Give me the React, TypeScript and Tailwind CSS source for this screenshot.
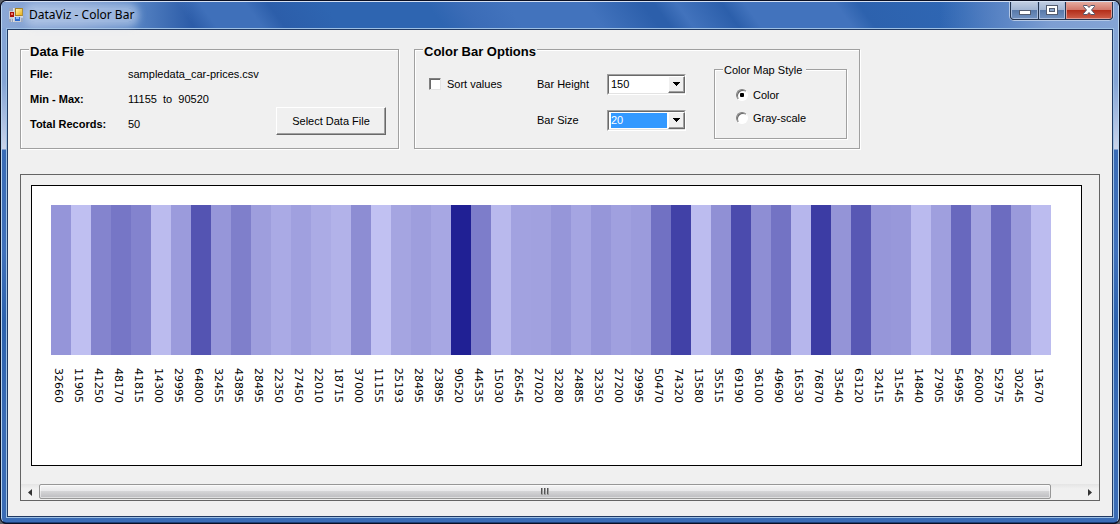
import { useState } from "react";
import type { ReactNode } from "react";

const PRICES = [
  32660, 11905, 41250, 48170, 41815, 14300, 29995, 64800, 32455, 43895,
  28495, 22350, 27450, 22010, 18715, 37000, 11155, 25193, 28495, 23895,
  90520, 44535, 15030, 26545, 27020, 32280, 24885, 32350, 27200, 29995,
  50470, 74320, 13580, 35515, 69190, 36100, 49690, 16530, 76870, 33540,
  63120, 32415, 31545, 14840, 27905, 54995, 26000, 52975, 30245, 13670,
];

const MIN = Math.min(...PRICES);
const MAX = Math.max(...PRICES);

function shade(value: number, gray: boolean) {
  const t = (value - MIN) / (MAX - MIN);
  const level = Math.round(193 - 161 * t);
  const blue = gray ? level : Math.round(242 - 94 * t);
  return `rgb(${level}, ${level}, ${blue})`;
}

function Group({ title, small, className, children }: {
  title: string;
  small?: boolean;
  className: string;
  children: ReactNode;
}) {
  return (
    <fieldset
      className={`min-w-0 border border-[#a0a0a0] shadow-[inset_1px_1px_0_#fff,1px_1px_0_#fff] ${className}`}
    >
      <legend
        className={`ml-2 bg-[#f0f0f0] leading-4 ${small ? "pt-[2px] pr-1 pl-px text-[11px]" : "px-px pt-[5px] text-[13px] font-bold"}`}
      >
        {title}
      </legend>
      {children}
    </fieldset>
  );
}

function Row({ label, value }: { label: string; value: string }) {
  return (
    <div className="flex h-[25px] items-center">
      <dt className="w-[98px] font-bold">{label}</dt>
      <dd className="whitespace-pre">{value}</dd>
    </div>
  );
}

function Combo({ id, label, value, options, selected, onChange }: {
  id: string;
  label: string;
  value: number;
  options: number[];
  selected?: boolean;
  onChange: (v: number) => void;
}) {
  return (
    <div className="flex h-9 items-center">
      <label htmlFor={id} className="w-[70px]">{label}</label>
      <div className="relative h-[21px] w-[79px] border border-t-[#a0a0a0] border-r-white border-b-white border-l-[#a0a0a0]">
        <div className="h-full border border-t-[#696969] border-r-[#e3e3e3] border-b-[#e3e3e3] border-l-[#696969] bg-white">
          <select
            id={id}
            value={value}
            onChange={(e) => onChange(Number(e.target.value))}
            className={`block h-full w-full appearance-none rounded-none border border-white bg-clip-content py-0 pr-4 pl-px text-[11px] leading-[15px] outline-none ${selected ? "bg-[#3399ff] text-white" : "bg-white text-black"}`}
          >
            {options.map((o) => (
              <option key={o} value={o}>{o}</option>
            ))}
          </select>
        </div>
        <span className="pointer-events-none absolute inset-y-px right-0 flex w-[17px] items-center justify-center border border-t-white border-r-[#696969] border-b-[#696969] border-l-white bg-[#f0f0f0] shadow-[inset_-1px_-1px_0_#a0a0a0]">
          <svg width="7" height="4" viewBox="0 0 7 4" shapeRendering="crispEdges" aria-hidden="true">
            <path d="M0 0h7v1H6v1H5v1H4v1H3V3H2V2H1V1H0z" fill="#000" />
          </svg>
        </span>
      </div>
    </div>
  );
}

function Radio({ label, checked, onChange }: {
  label: string;
  checked: boolean;
  onChange: () => void;
}) {
  return (
    <label className="flex h-[23px] items-center gap-[5px]">
      <span className="relative size-3">
        <input
          type="radio"
          name="map"
          checked={checked}
          onChange={onChange}
          className="block size-3 appearance-none rounded-full border border-t-[#808080] border-r-white border-b-white border-l-[#808080] bg-white shadow-[inset_1px_1px_0_#696969]"
        />
        {checked && (
          <span className="pointer-events-none absolute top-1 left-1 size-1 rounded-[1px] bg-black" />
        )}
      </span>
      <span>{label}</span>
    </label>
  );
}

function AppIcon() {
  return (
    <svg width="14" height="14" viewBox="0 0 14 14" shapeRendering="crispEdges" aria-hidden="true">
      <defs>
        <linearGradient id="gold" x1="0" y1="0" x2="1" y2="1">
          <stop offset="0" stopColor="#fff6b0" />
          <stop offset="1" stopColor="#f0ac00" />
        </linearGradient>
      </defs>
      <rect width="14" height="14" fill="#c9cdd6" />
      <path d="M0 0h4v3H0zM0 11h2v3H0zM3 11h1v3H3zM12 10h2v4h-2z" fill="#97a5bd" />
      <path d="M4 0h1v14H4zM5 8h9v1H5z" fill="#d9dce3" />
      <rect x="1" y="4" width="4" height="5" fill="#a81208" />
      <rect x="2" y="5" width="2" height="2" fill="#ee7a68" />
      <rect x="6" y="0" width="8" height="8" fill="#a8801c" />
      <rect x="7" y="1" width="6" height="6" fill="url(#gold)" />
      <rect x="6" y="9" width="5" height="4" fill="#2c69cc" />
      <rect x="7" y="9" width="3" height="2" fill="#8fbcf4" />
    </svg>
  );
}

function TitleBar() {
  return (
    <header className="relative flex h-[26px] items-center bg-[linear-gradient(90deg,#8ba8d6_0%,#7898cd_7%,#5683c3_12%,transparent_17%,transparent_84%,#5d87c6_90%,#7d9ed2_94%,#84a4d5_100%),linear-gradient(54deg,#2c5ca8_0%,#2c5ca8_17%,#3f70ba_19%,#3f70ba_23%,#2c5eaa_25%,#2e65b1_30%,#2e65b1_39%,#3b6cb7_42%,#4273bd_46%,#4273bd_53%,#2c5fab_58%,#2c5fab_59%,#4273bd_61%,#2c5fab_65%,#4273bd_67%,#4273bd_75%,#2d62ae_77%,#2f67b4_86%,#3b6ab5_90%)]">
      <div className="flex items-center gap-[6px] pl-[7px]">
        <AppIcon />
        <h1 className="rounded-[6px] bg-[#c8d9f0]/55 font-['Noto_Sans','Open_Sans',sans-serif] text-[12px] leading-[14px] whitespace-nowrap text-black shadow-[0_0_7px_5px_rgba(200,217,240,0.55)]">
          DataViz - Color Bar
        </h1>
      </div>
      <div className="absolute top-[-2px] right-[4px] flex h-[21px] rounded-b-[5px] border border-t-0 border-[#b4c8e6] bg-[#24344f]">
        <div className="flex gap-px overflow-hidden rounded-b-[4px] border border-[#24344f]">
          <button
            type="button"
            aria-label="Minimize"
            className="flex w-[27px] items-end justify-center border border-[#a9bddd] bg-[linear-gradient(#c0cde2_0%,#a2b5d3_48%,#5879a9_50%,#7090bf_100%)] pb-[3px]"
          >
            <svg width="12" height="5" viewBox="0 0 12 5" aria-hidden="true">
              <rect x="0.500" y="0.500" width="11" height="4" fill="#fff" stroke="#535c70" />
            </svg>
          </button>
          <button
            type="button"
            aria-label="Maximize"
            className="flex w-[26px] items-center justify-center border border-[#a9bddd] bg-[linear-gradient(#c0cde2_0%,#a2b5d3_48%,#5879a9_50%,#7090bf_100%)]"
          >
            <svg width="12" height="10" viewBox="0 0 12 10" aria-hidden="true">
              <rect x="0.500" y="0.500" width="11" height="9" fill="#fff" stroke="#535c70" />
              <rect x="3.500" y="3.500" width="5" height="3" fill="#8da7cc" stroke="#535c70" />
            </svg>
          </button>
          <button
            type="button"
            aria-label="Close"
            className="flex w-[46px] items-center justify-center border border-[#df9a92] bg-[linear-gradient(#e5ab9f_0%,#d2796c_48%,#b22c18_50%,#cc5a45_100%)]"
          >
            <svg width="12" height="10" viewBox="0 0 12 10" aria-hidden="true">
              <path
                d="M0.500 0.500h3.700L6 2.500 7.800 0.500h3.700v1L8.500 5l3 3.500v1H7.800L6 7.500 4.200 9.500H0.500v-1l3-3.500-3-3.500z"
                fill="#fff"
                stroke="#53566b"
              />
            </svg>
          </button>
        </div>
      </div>
    </header>
  );
}

function ScrollBar() {
  return (
    <div className="flex h-4 bg-[linear-gradient(#e4e4e4,#f0f0f0_30%)]">
      <button type="button" aria-label="Scroll left" className="flex w-[18px] items-center justify-center">
        <svg width="4" height="7" viewBox="0 0 4 7" aria-hidden="true">
          <path d="M4 0v7L0 3.500z" fill="#333" />
        </svg>
      </button>
      <div className="mr-[30px] flex h-[15px] flex-1 items-center justify-center rounded-[2px] border border-[#979797] bg-[linear-gradient(#f5f5f5_0%,#e8e8ea_48%,#d4d4d6_50%,#bcbcbf_100%)] shadow-[inset_0_0_0_1px_rgba(255,255,255,0.5)]">
        <svg width="8" height="7" viewBox="0 0 8 7" shapeRendering="crispEdges" aria-hidden="true">
          <path d="M0 0h2v7H0zM3 0h2v7H3zM6 0h2v7H6z" fill="#a0a0a0" />
          <path d="M0 0h1v6H0zM3 0h1v6H3zM6 0h1v6H6z" fill="#555" />
        </svg>
      </div>
      <button type="button" aria-label="Scroll right" className="flex w-[18px] items-center justify-center">
        <svg width="4" height="7" viewBox="0 0 4 7" aria-hidden="true">
          <path d="M0 0v7l4-3.500z" fill="#333" />
        </svg>
      </button>
    </div>
  );
}

export default function App() {
  const [sorted, setSorted] = useState(false);
  const [height, setHeight] = useState(150);
  const [size, setSize] = useState(20);
  const [gray, setGray] = useState(false);
  const values = sorted ? [...PRICES].sort((a, b) => a - b) : PRICES;

  return (
    <div className="flex min-h-screen flex-col bg-[#5b6068] font-['Liberation_Sans',Arial,sans-serif] text-[11px] leading-4 text-black">
      <div className="flex flex-1 flex-col overflow-hidden rounded-[6px] border border-[#0a1024] bg-[#0a1024]">
        <div className="flex flex-1 flex-col overflow-hidden rounded-[5px] border border-t-[#d5e0f2] border-r-[#b9d4ef] border-b-[#1d3f78] border-l-[#b9d4ef] bg-[linear-gradient(#84a4d5_0px,#84a4d5_80px,#c9d3ea_147px,#3a6cb6_148px,#4071bb_250px,#2c62ae_320px,#3a6cb6_420px)]">
          <TitleBar />
          <div className="flex flex-1 flex-col px-1 pb-1">
            <div className="flex flex-1 flex-col border border-[#9dc0e4]">
              <main className="flex flex-1 flex-col border border-[#213a63] bg-[#f0f0f0] px-3 pt-[9px] pb-[15px]">
                <div className="flex items-stretch gap-[15px]">
                  <Group title="Data File" className="w-[379px]">
                    <div className="flex items-end justify-between pt-px pr-3 pb-3 pl-[9px]">
                      <dl>
                        <Row label="File:" value="sampledata_car-prices.csv" />
                        <Row label="Min - Max:" value="11155  to  90520" />
                        <Row label="Total Records:" value="50" />
                      </dl>
                      <button
                        type="button"
                        className="mb-px h-7 w-[110px] border border-t-white border-r-[#696969] border-b-[#696969] border-l-white bg-[#f0f0f0] shadow-[inset_-1px_-1px_0_#a0a0a0]"
                      >
                        Select Data File
                      </button>
                    </div>
                  </Group>
                  <Group title="Color Bar Options" className="w-[446px]">
                    <div className="flex items-start pr-3 pl-[14px]">
                      <label className="mt-[6px] flex h-9 w-[108px] items-center gap-[6px]">
                        <input
                          type="checkbox"
                          checked={sorted}
                          onChange={(e) => setSorted(e.target.checked)}
                          className="size-3 appearance-none border border-t-[#808080] border-r-[#e3e3e3] border-b-[#e3e3e3] border-l-[#808080] bg-white shadow-[inset_1px_1px_0_#696969] checked:bg-black"
                        />
                        <span>Sort values</span>
                      </label>
                      <div className="mt-[6px] mr-7">
                        <Combo
                          id="bar-height"
                          label="Bar Height"
                          value={height}
                          options={[50, 100, 150]}
                          onChange={setHeight}
                        />
                        <Combo
                          id="bar-size"
                          label="Bar Size"
                          value={size}
                          options={[10, 15, 20]}
                          selected
                          onChange={setSize}
                        />
                      </div>
                      <Group title="Color Map Style" small className="flex-1">
                        <div className="pt-[5px] pb-[9px] pl-[21px]">
                          <Radio label="Color" checked={!gray} onChange={() => setGray(false)} />
                          <Radio label="Gray-scale" checked={gray} onChange={() => setGray(true)} />
                        </div>
                      </Group>
                    </div>
                  </Group>
                </div>

                <section aria-label="Color bar" className="mt-[25px] flex flex-1 flex-col border border-[#646464]">
                  <div className="flex-1 overflow-x-auto pt-[10px] pb-[18px] pl-[10px]">
                    <div className="w-max border border-black bg-white pt-[19px] pr-[30px] pb-[62px] pl-[19px]">
                      <ol className="flex">
                        {values.map((v, i) => (
                          <li key={i} className="flex flex-col items-center" style={{ width: size }}>
                            <div
                              className="w-full"
                              style={{ height, backgroundColor: shade(v, gray) }}
                            />
                            <span className="mt-[13px] mr-[6px] font-['DejaVu_Sans',Verdana,sans-serif] text-[11px] leading-[14px] [writing-mode:vertical-rl]">
                              {v}
                            </span>
                          </li>
                        ))}
                      </ol>
                    </div>
                  </div>
                  <ScrollBar />
                </section>
              </main>
            </div>
          </div>
        </div>
      </div>
    </div>
  );
}
